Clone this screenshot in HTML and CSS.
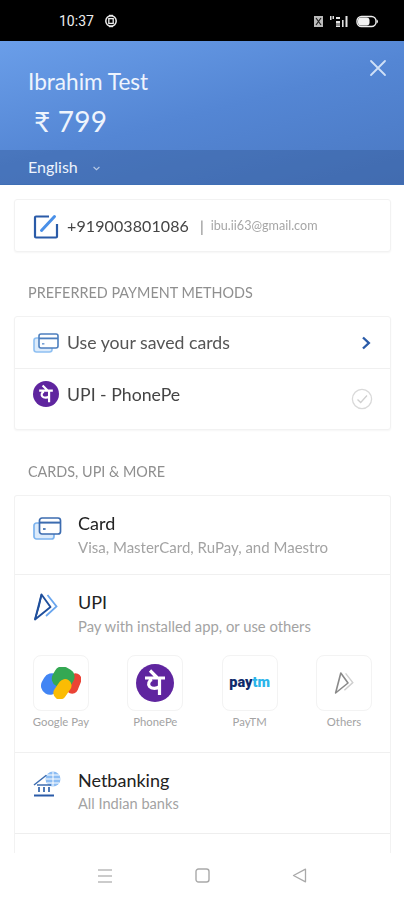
FILE: index.html
```html
<!DOCTYPE html>
<html lang="en">
<head>
<meta charset="utf-8">
<title>Checkout</title>
<link rel="stylesheet" href="styles.css">
</head>
<body>
<div class="screen">
  <div class="status">
    <div class="status-left">
      <span class="clock">10:37</span>
      <svg class="st-icon" width="14" height="14" viewBox="0 0 14 14"><circle cx="7" cy="7" r="5.2" fill="none" stroke="#eee" stroke-width="1.5"/><rect x="4.8" y="4.6" width="4.4" height="4.8" fill="none" stroke="#eee" stroke-width="1.3"/><rect x="5" y="0.8" width="4" height="1.6" fill="#eee"/><rect x="5" y="11.6" width="4" height="1.6" fill="#eee"/></svg>
    </div>
    <div class="status-right">
      <svg width="11" height="13" viewBox="0 0 11 13"><path d="M1 1h9v11H1z" fill="#bbb"/><path d="M3 3l5 7M8 3l-5 7" stroke="#222" stroke-width="1.2"/></svg>
      <svg width="20" height="13" viewBox="0 0 20 13"><rect x="1" y="1" width="1.5" height="4" fill="#ddd"/><rect x="3.5" y="1" width="1.5" height="3" fill="#ddd"/><path d="M7 2h4v2H7zM7 6h4v6H7z" fill="#e4e4e4"/><path d="M7.5 8h1v3h-1zM9.5 8h1v3h-1z" fill="#333"/><rect x="13" y="5" width="1.6" height="7" fill="#ddd"/><rect x="16.5" y="1" width="2" height="11" fill="#e4e4e4"/></svg>
      <svg class="battery" width="23" height="13" viewBox="0 0 23 13"><rect x="1" y="1.5" width="19" height="10" rx="4.5" fill="none" stroke="#eee" stroke-width="1.4"/><rect x="2" y="2.5" width="11.5" height="8" rx="3" fill="#f2f2f2"/><path d="M20.6 4.2a2.6 2.6 0 0 1 0 4.6z" fill="#eee"/></svg>
    </div>
  </div>

  <header class="hero">
    <div class="hero-top">
      <div class="merchant">
        <div class="merchant-name">Ibrahim Test</div>
        <div class="amount">₹ 799</div>
      </div>
      <svg class="close" width="18" height="18" viewBox="0 0 18 18"><path d="M2 2l14 14M16 2L2 16" stroke="#cfe0f7" stroke-width="1.8" stroke-linecap="round"/></svg>
    </div>
    <div class="lang">
      <span>English</span>
      <svg class="lang-chev" width="9" height="5" viewBox="0 0 10 6"><path d="M1.5 1.2L5 4.4l3.5-3.2" fill="none" stroke="#b9cbe6" stroke-width="1.3"/></svg>
    </div>
  </header>

  <main class="content">
    <section class="card contact">
      <svg class="icon-edit" width="26" height="26" viewBox="0 0 26 26">
        <path d="M16 3.5H3a1 1 0 0 0-1 1v19a1 1 0 0 0 1 1h20a1 1 0 0 0 1-1V11" fill="none" stroke="#2a5ba8" stroke-width="2.2"/>
        <path d="M8.5 17.5L21.5 3.5" stroke="#4a90e8" stroke-width="3" stroke-linecap="round"/>
      </svg>
      <span class="phone">+919003801086</span>
      <span class="sep">|</span>
      <span class="email">ibu.ii63@gmail.com</span>
    </section>

    <h2 class="section-label first">PREFERRED PAYMENT METHODS</h2>
    <section class="card">
      <div class="row saved">
        <svg width="26" height="22" viewBox="0 0 26 22">
          <rect x="1" y="6" width="18" height="14" rx="2.5" fill="#dcebfb" stroke="#8fc0f2" stroke-width="1.6"/>
          <rect x="6" y="2" width="19" height="14" rx="2" fill="#fff" stroke="#4d7fbe" stroke-width="1.6"/>
          <rect x="6" y="5.5" width="19" height="1.8" fill="#4d7fbe"/>
          <rect x="9" y="11" width="2.4" height="1.6" fill="#7aa3d6"/>
        </svg>
        <span class="row-text">Use your saved cards</span>
        <svg class="chev" width="10" height="14" viewBox="0 0 10 14"><path d="M2 1.5L7.8 7 2 12.5" fill="none" stroke="#2a5ba8" stroke-width="2.4"/></svg>
      </div>
      <div class="row upi-pref">
        <svg width="26" height="26" viewBox="0 0 38 38"><circle cx="19" cy="19" r="19" fill="#5f259f"/><path d="M9 14h20M23.5 14v17M23.5 22.5c-2.5 2.5-8 2.5-10 0-1.8-2.3-.6-6 2.5-7M14 6.5l7 7" fill="none" stroke="#fff" stroke-width="3.2"/></svg>
        <span class="row-text">UPI - PhonePe</span>
        <svg class="tick" width="22" height="22" viewBox="0 0 22 22"><circle cx="11" cy="11" r="9.6" fill="none" stroke="#d9d9d9" stroke-width="1.3"/><path d="M6.5 11.5l3.2 3L16 7.5" fill="none" stroke="#cfcfcf" stroke-width="1.3"/></svg>
      </div>
    </section>

    <h2 class="section-label second">CARDS, UPI &amp; MORE</h2>
    <section class="card methods">
      <div class="method method-card">
        <svg class="method-icon" width="29" height="25" viewBox="0 0 29 25">
          <rect x="1" y="7" width="20" height="16" rx="2.5" fill="#dcebfb" stroke="#7db4ef" stroke-width="1.7"/>
          <rect x="6.5" y="2" width="21" height="16" rx="2.5" fill="#fff" stroke="#3c6cb0" stroke-width="1.7"/>
          <rect x="6.5" y="5.6" width="21" height="2" fill="#3c6cb0"/>
          <rect x="10" y="12" width="2.6" height="2" fill="#5a83ba"/>
        </svg>
        <div class="method-text">
          <div class="method-title">Card</div>
          <div class="method-sub card-sub">Visa, MasterCard, RuPay, and Maestro</div>
        </div>
      </div>
      <div class="upi-block">
        <div class="method method-upi">
          <svg class="method-icon" width="25" height="28" viewBox="0 0 25 28">
            <path d="M14.5 2L23.5 13.5 13 23" fill="none" stroke="#6aa6ee" stroke-width="1.8"/>
            <path d="M8.5 1.5L17.5 14 2 26.5Z" fill="none" stroke="#1f4f9c" stroke-width="1.9" stroke-linejoin="round"/>
            <path d="M8.5 1.5L6 13 2 26.5" fill="none" stroke="#1f4f9c" stroke-width="1.6"/>
          </svg>
          <div class="method-text">
            <div class="method-title">UPI</div>
            <div class="method-sub">Pay with installed app, or use others</div>
          </div>
        </div>
        <div class="apps">
          <div class="app">
            <div class="app-box">
              <svg width="40" height="32" viewBox="0 0 40 32">
                <rect x="27" y="6" width="12" height="21" rx="6" transform="rotate(22 33 16)" fill="#ea4335"/>
                <rect x="1" y="6" width="18" height="22" rx="9" transform="rotate(30 10 17)" fill="#4285f4"/>
                <rect x="12" y="0" width="21" height="21" rx="8" transform="rotate(30 22 10)" fill="#34a853"/>
                <rect x="15" y="11" width="13" height="22" rx="6.5" transform="rotate(35 21 22)" fill="#fbbc04"/>
              </svg>
            </div>
            <div class="app-name">Google Pay</div>
          </div>
          <div class="app">
            <div class="app-box">
              <svg width="38" height="38" viewBox="0 0 38 38"><circle cx="19" cy="19" r="19" fill="#5f259f"/><path d="M9 14h20M23.5 14v17M23.5 22.5c-2.5 2.5-8 2.5-10 0-1.8-2.3-.6-6 2.5-7M14 6.5l7 7" fill="none" stroke="#fff" stroke-width="3.2"/></svg>
            </div>
            <div class="app-name">PhonePe</div>
          </div>
          <div class="app">
            <div class="app-box">
              <span class="paytm"><span class="pay">pay</span><span class="tm">tm</span></span>
            </div>
            <div class="app-name">PayTM</div>
          </div>
          <div class="app">
            <div class="app-box">
              <svg width="20" height="24" viewBox="0 0 25 28">
                <path d="M14.5 2L23.5 13.5 13 23" fill="none" stroke="#cfcfcf" stroke-width="1.8"/>
                <path d="M8.5 1.5L17.5 14 2 26.5Z" fill="none" stroke="#8a8a8a" stroke-width="2" stroke-linejoin="round"/>
              </svg>
            </div>
            <div class="app-name">Others</div>
          </div>
        </div>
      </div>
      <div class="method method-net">
        <svg class="method-icon" width="28" height="26" viewBox="0 0 28 26">
          <path d="M1 14L13 4.5 17 6" fill="none" stroke="#3c6cb0" stroke-width="1.5"/>
          <circle cx="20" cy="8" r="7.5" fill="#8dbdf3"/>
          <path d="M12.5 8h15M20 .5v15M14 4h12M14 12h12" stroke="#fff" stroke-width="1"/>
          <path d="M4 14h14" stroke="#3c6cb0" stroke-width="1.5"/>
          <path d="M6 16v5M11 16v5M16 16v5" stroke="#3c6cb0" stroke-width="1.8"/>
          <rect x="1" y="23.5" width="20" height="2" fill="#2a5ba8"/>
        </svg>
        <div class="method-text">
          <div class="method-title">Netbanking</div>
          <div class="method-sub net-sub">All Indian banks</div>
        </div>
      </div>
    </section>
  </main>

  <nav class="navbar">
    <svg width="16" height="16" viewBox="0 0 16 16"><path d="M1 2h14M1 8h14M1 14h14" stroke="#bbb" stroke-width="1.4"/></svg>
    <svg width="15" height="15" viewBox="0 0 15 15"><rect x="1" y="1" width="13" height="13" rx="2.5" fill="none" stroke="#a9a9a9" stroke-width="1.4"/></svg>
    <svg width="15" height="15" viewBox="0 0 15 15"><path d="M13.5 1.2v12.6L1.5 7.5Z" fill="none" stroke="#a9a9a9" stroke-width="1.3" stroke-linejoin="round"/></svg>
  </nav>
</div>
</body>
</html>
```

FILE: styles.css
```css
* { box-sizing: border-box; }
html, body { margin: 0; padding: 0; }
body {
  width: 404px;
  height: 900px;
  overflow: hidden;
  background: #fff;
  font-family: "Lato", "Noto Sans", sans-serif;
  color: #333;
}
.screen { width: 404px; height: 900px; display: flex; flex-direction: column; overflow: hidden; filter: blur(0.45px); }

.status {
  height: 41px;
  flex: none;
  background: #000;
  display: flex;
  align-items: center;
  justify-content: space-between;
  padding: 10px 0 9px 59px;
  color: #eee;
}
.status-left { display: flex; align-items: center; gap: 10px; }
.clock { font-size: 14px; font-weight: 400; font-family: "Roboto", sans-serif; }
.status-right { display: flex; align-items: center; gap: 5px; padding-right: 25px; }
.battery { margin-left: 2px; }

.hero {
  flex: none;
  height: 144px;
  background: linear-gradient(165deg, #6a9ee9 0%, #5486d4 50%, #4a78c2 100%);
  display: flex;
  flex-direction: column;
  color: #eef4fd;
}
.hero-top { flex: 1; display: flex; justify-content: space-between; padding: 0 17px 0 28px; }
.merchant-name { font-size: 22.6px; line-height: 28px; margin-top: 27px; }
.amount { font-size: 28px; line-height: 36px; margin: 7px 0 0 6px; letter-spacing: 0.2px; }
.close { margin-top: 18px; }
.lang {
  height: 35px;
  background: rgba(50, 85, 145, 0.36);
  border-bottom: 1px solid #3f6fb5;
  display: flex;
  align-items: center;
  gap: 14px;
  padding-left: 28px;
  padding-bottom: 2px;
  font-size: 16px;
}
.lang-chev { margin-top: 4px; }

.content { flex: 1; min-height: 0; overflow: hidden; padding: 14px 13px 0 14px; }
.card { background: #fff; border: 1px solid #f2f2f2; border-radius: 3px; box-shadow: 0 1px 2px rgba(0,0,0,0.04); }
.contact { height: 53px; display: flex; align-items: center; padding-left: 18px; }
.icon-edit { flex: none; }
.phone { font-size: 16px; color: #444; margin-left: 8px; letter-spacing: 0.1px; }
.sep { color: #888; font-size: 15px; margin-left: 11px; }
.email { color: #a6a6a6; font-size: 12.6px; margin-left: 7px; }

.section-label { margin: 0; font-size: 14.4px; font-weight: 400; color: #8f8f8f; padding-left: 14px; line-height: 18px; }
.section-label.first { margin-top: 32px; margin-bottom: 14px; }
.section-label.second { margin-top: 33px; margin-bottom: 14px; }

.row { display: flex; align-items: center; padding: 0 17px 0 18px; }
.row svg { flex: none; }
.saved { height: 52px; border-bottom: 1px solid #f0f0f0; }
.upi-pref { height: 60px; padding-bottom: 10px; }
.row-text { flex: 1; font-size: 17.7px; color: #555; margin-left: 8px; }
.upi-pref .row-text { margin-left: 8px; color: #444; }
.chev { margin-right: 2px; }
.tick { margin-top: 10px; }

.methods { height: 400px; border-bottom: none; box-shadow: none; }
.method { display: flex; align-items: flex-start; padding-left: 18px; }
.method-icon { flex: none; }
.method-text { margin-left: 16px; }
.method-title { font-size: 18px; line-height: 22px; color: #222; }
.method-sub { font-size: 14.8px; line-height: 18px; color: #a3a3a3; margin-top: 4px; }
.card-sub { font-size: 15px; }
.net-sub { font-size: 14.6px; }
.method-card { height: 79px; border-bottom: 1px solid #f0f0f0; padding-top: 16px; }
.method-card .method-icon { margin-top: 4px; }
.method-upi { padding-top: 16px; }
.method-upi .method-icon { margin-right: 3px; margin-top: 2px; }
.method-upi .method-text { margin-left: 17px; }
.upi-block { height: 178px; border-bottom: 1px solid #f0f0f0; }
.apps { display: flex; justify-content: space-between; padding: 20px 18px 0 18px; }
.app { width: 56px; display: flex; flex-direction: column; align-items: center; }
.app-box {
  width: 56px; height: 56px;
  border: 1px solid #f3f3f3;
  border-radius: 8px;
  display: flex;
  align-items: center;
  justify-content: center;
}
.app-name { font-size: 11.3px; color: #a3a3a3; margin-top: 4px; line-height: 14px; white-space: nowrap; }
.paytm { font-family: "Roboto", sans-serif; font-weight: 900; font-size: 14.5px; letter-spacing: 0; line-height: 1; }
.pay { color: #0f2a6b; }
.tm { color: #2bb5ea; }
.method-net { height: 81px; border-bottom: 1px solid #eee; padding-top: 16px; }
.method-net .method-icon { margin-top: 2px; }
.method-net .method-text { margin-left: 17px; }

.navbar {
  flex: none;
  height: 47px;
  background: #fff;
  display: flex;
  align-items: center;
  justify-content: center;
  gap: 82px;
  padding-bottom: 2px;
}
```
